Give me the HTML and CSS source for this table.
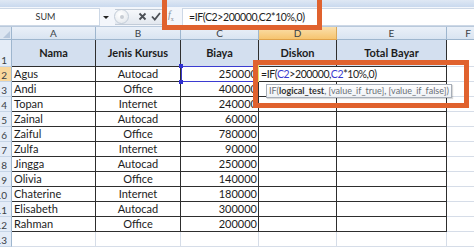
FILE: index.html
```html
<!DOCTYPE html>
<html>
<head>
<meta charset="utf-8">
<link rel="stylesheet" href="styles.css">
</head>
<body>
<div class="strip"></div>
<div class="fbar">
  <div class="namebox">SUM</div>
  <div class="nb-arrow"></div>
  <div class="pill">
    <span class="pill-circle"><span class="pill-dot"></span></span>
    <svg class="ico" width="9" height="9" viewBox="0 0 9 9"><path d="M1.5 1.5 L7.5 7.5 M7.5 1.5 L1.5 7.5" stroke="#4b4f55" stroke-width="1.8" fill="none"/></svg>
    <svg class="ico" width="10" height="9" viewBox="0 0 10 9"><path d="M1 4.5 L3.8 7.5 L9 1" stroke="#4b4f55" stroke-width="1.8" fill="none"/></svg>
  </div>
  <div class="fx"><i>f</i><sub>x</sub></div>
  <div class="finput formula">=IF(C2&gt;200000,C2*10%,0)</div>
</div>
<div class="sheet">
  <div class="corner"><span class="tri"></span></div>
  <div class="ch">A</div><div class="ch">B</div><div class="ch">C</div><div class="ch sel">D</div><div class="ch">E</div><div class="ch">F</div>

  <div class="rh">1</div>
  <div class="c t h">Nama</div><div class="c t h">Jenis Kursus</div><div class="c t h">Biaya</div><div class="c t h">Diskon</div><div class="c t h">Total Bayar</div><div class="c"></div>

  <div class="rh sel">2</div>
  <div class="c t">Agus</div><div class="c t m">Autocad</div><div class="c t r">250000</div><div class="c t edit"><span class="formula">=IF(<b class="ref">C2</b>&gt;200000,<b class="ref">C2</b>*10%,0)</span></div><div class="c t"></div><div class="c"></div>

  <div class="rh">3</div>
  <div class="c t">Andi</div><div class="c t m">Office</div><div class="c t r">400000</div><div class="c t"></div><div class="c t"></div><div class="c"></div>

  <div class="rh">4</div>
  <div class="c t">Topan</div><div class="c t m">Internet</div><div class="c t r">240000</div><div class="c t"></div><div class="c t"></div><div class="c"></div>

  <div class="rh">5</div>
  <div class="c t">Zainal</div><div class="c t m">Autocad</div><div class="c t r">60000</div><div class="c t"></div><div class="c t"></div><div class="c"></div>

  <div class="rh">6</div>
  <div class="c t">Zaiful</div><div class="c t m">Office</div><div class="c t r">780000</div><div class="c t"></div><div class="c t"></div><div class="c"></div>

  <div class="rh">7</div>
  <div class="c t">Zulfa</div><div class="c t m">Internet</div><div class="c t r">90000</div><div class="c t"></div><div class="c t"></div><div class="c"></div>

  <div class="rh">8</div>
  <div class="c t">Jingga</div><div class="c t m">Autocad</div><div class="c t r">250000</div><div class="c t"></div><div class="c t"></div><div class="c"></div>

  <div class="rh">9</div>
  <div class="c t">Olivia</div><div class="c t m">Office</div><div class="c t r">140000</div><div class="c t"></div><div class="c t"></div><div class="c"></div>

  <div class="rh">10</div>
  <div class="c t">Chaterine</div><div class="c t m">Internet</div><div class="c t r">180000</div><div class="c t"></div><div class="c t"></div><div class="c"></div>

  <div class="rh">11</div>
  <div class="c t">Elisabeth</div><div class="c t m">Autocad</div><div class="c t r">300000</div><div class="c t"></div><div class="c t"></div><div class="c"></div>

  <div class="rh">12</div>
  <div class="c t">Rahman</div><div class="c t m">Office</div><div class="c t r">200000</div><div class="c t"></div><div class="c t"></div><div class="c"></div>

  <div class="rh">13</div>
  <div class="c"></div><div class="c"></div><div class="c"></div><div class="c"></div><div class="c"></div><div class="c"></div>
</div>

<div class="refbox"><span class="hdl h1"></span><span class="hdl h2"></span></div>
<div class="caret"></div>
<div class="tip">IF(<b>logical_test</b>, [value_if_true], [value_if_false])</div>
<div class="mark m1"></div>
<div class="mark m2"></div>
</body>
</html>
```

FILE: styles.css
```css
* { box-sizing: border-box; margin: 0; padding: 0; }
html, body { width: 474px; height: 247px; overflow: hidden; background: #fff; }
body {
  position: relative;
  font-family: Lato, "Open Sans", "Liberation Sans", sans-serif;
  font-size: 11px;
  color: #1c1c1c;
}

.strip { height: 7px; background: linear-gradient(#dfe8f4, #c9d9ee); }

.fbar {
  height: 20px;
  display: flex;
  align-items: center;
  background: #f3f6fb;
  border-bottom: 1px solid #b9c9dc;
}
.namebox {
  width: 100px;
  height: 18px;
  background: #fff;
  border: 1px solid #cdd8e6;
  border-left: none;
  font-size: 9px;
  line-height: 16px;
  text-align: center;
  color: #333;
  padding-right: 8px;
}
.nb-arrow {
  width: 0; height: 0;
  margin: 1px 4px 0 3px;
  border-left: 3px solid transparent;
  border-right: 3px solid transparent;
  border-top: 3px solid #222;
}
.pill {
  display: flex;
  align-items: center;
  gap: 4px;
  height: 16px;
  width: 50px;
  margin-left: 2px;
  border: 1px solid #c2ccd8;
  border-left: none;
  border-radius: 0 3px 3px 0;
  background: linear-gradient(#f6f8fb, #e3e8ef);
}
.pill-circle {
  width: 15px; height: 15px;
  margin-left: -1px;
  border-radius: 50%;
  border: 1px solid #c2ccd8;
  background: radial-gradient(circle at 40% 35%, #ffffff, #dfe4ea);
  display: flex; align-items: center; justify-content: center;
  margin-right: 5px;
}
.pill-dot { width: 4px; height: 4px; border-radius: 50%; background: #c8cdd4; }
.ico { display: block; }
.fx {
  width: 12px;
  margin-left: 3px;
  font-family: "Liberation Serif", serif;
  font-size: 10px;
  color: #8a8f96;
  line-height: 10px;
}
.fx sub { font-size: 6px; }
.finput {
  flex: 1;
  height: 18px;
  margin-left: 2px;
  background: #fff;
  border: 1px solid #cdd8e6;
  border-right: none;
  padding-left: 6px;
  line-height: 16px;
  white-space: nowrap;
}
.formula { font-size: 10.5px; letter-spacing: -0.4px; }

.sheet {
  display: grid;
  grid-template-columns: 12px 84px 85px 78px 78px 110px 43px;
  grid-template-rows: 13px 27px repeat(12, 15px);
  width: 490px;
}
.corner {
  background: #dde6f1;
  border-right: 1px solid #9eb6ce;
  border-bottom: 1px solid #9eb6ce;
  display: flex;
  justify-content: flex-end;
  align-items: flex-end;
  padding: 0 1px 1px 0;
}
.tri {
  width: 0; height: 0;
  border-left: 7px solid transparent;
  border-bottom: 7px solid #b8c8dc;
}
.ch {
  background: linear-gradient(#eaf0f8, #d9e4f1);
  border-right: 1px solid #9eb6ce;
  border-bottom: 1px solid #9eb6ce;
  text-align: center;
  font-size: 10px;
  line-height: 12px;
  color: #3a3f46;
}
.ch.sel { background: linear-gradient(#fbe0ac, #f6c46f); border-right-color: #d9a95a; border-bottom-color: #e0a24a; }

.rh {
  background: #e4ecf7;
  border-right: 1px solid #9eb6ce;
  border-bottom: 1px solid #c5d4e6;
  font-size: 10px;
  line-height: 12px;
  color: #3a3f46;
  display: flex;
  justify-content: flex-end;
  align-items: flex-end;
  padding-right: 4px;
  overflow: hidden;
  white-space: nowrap;
}
.rh.sel { background: #f9d79c; }

.c {
  border-right: 1px solid #d6dde8;
  border-bottom: 1px solid #d6dde8;
  padding: 0 2px;
  line-height: 14px;
  white-space: nowrap;
  overflow: hidden;
}
.c.t { border-right-color: #2e2e2e; border-bottom-color: #2e2e2e; }
.c.h {
  background: #d3dfef;
  font-weight: bold;
  text-align: center;
  line-height: 26px;
}
.c.m { text-align: center; }
.c.r { text-align: right; padding-right: 1px; }
.c.edit { overflow: visible; position: relative; z-index: 1; border-right: none; padding-left: 2px; }
.c.edit span { background: #fff; padding-right: 2px; }
.ref { font-weight: normal; color: #3a3acf; }

.refbox {
  position: absolute;
  left: 181px; top: 66px;
  width: 78px; height: 16px;
  border: 1px solid #3b3bd0;
}
.hdl { position: absolute; width: 4px; height: 4px; background: #2f2fd0; }
.h1 { left: -3px; top: -3px; }
.h2 { left: -3px; bottom: -3px; }

.caret {
  position: absolute;
  left: 257px; top: 64px;
  width: 2px; height: 18px;
  background: #e9e36a;
}

.tip {
  position: absolute;
  left: 266px; top: 84px;
  height: 14px;
  padding: 0 2px;
  background: linear-gradient(#ffffff, #eef1f5);
  border: 1px solid #a7aeb8;
  box-shadow: 1px 1px 1px rgba(0,0,0,0.15);
  font-size: 9px;
  line-height: 12px;
  color: #6a6f77;
  white-space: nowrap;
}
.tip b { color: #333; }

.mark {
  position: absolute;
  border: 5px solid #e0622e;
}
.m1 { left: 162px; top: -6px; width: 160px; height: 36px; }
.m2 { left: 253px; top: 60px; width: 216px; height: 48px; }
```
